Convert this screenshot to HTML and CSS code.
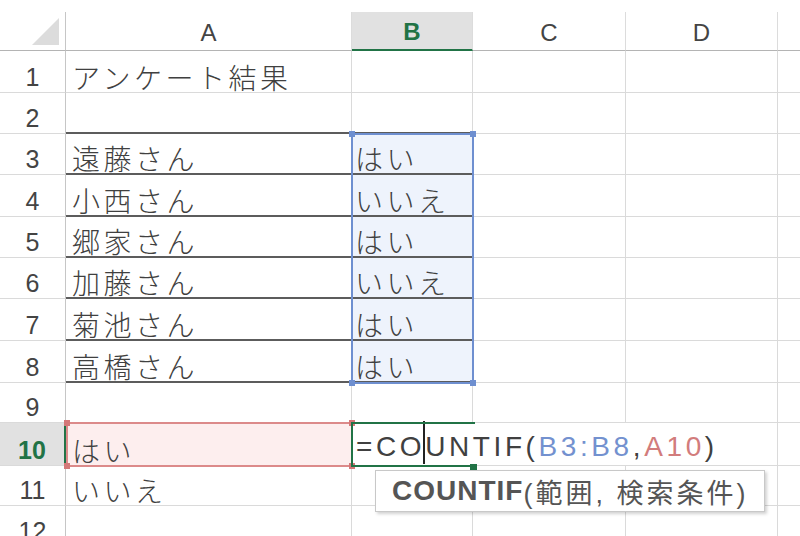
FILE: index.html
```html
<!DOCTYPE html>
<html lang="ja">
<head>
  <meta charset="UTF-8" />
  <title>COUNTIF</title>
  <link rel="stylesheet" href="styles.css">
</head>
<body>
  <div class="sheet">
    <div class="corner"><span class="tri"></span></div>
    <div class="col-head">A</div>
    <div class="col-head active">B</div>
    <div class="col-head">C</div>
    <div class="col-head">D</div>
    <div class="col-head"></div>

    <div class="row-head">1</div>
    <div class="cell">アンケート結果</div>
    <div class="cell b"></div><div class="cell"></div><div class="cell"></div><div class="cell"></div>

    <div class="row-head">2</div>
    <div class="cell tb"></div>
    <div class="cell b tb"></div><div class="cell"></div><div class="cell"></div><div class="cell"></div>

    <div class="row-head">3</div>
    <div class="cell tb">遠藤さん</div>
    <div class="cell b tb sel">はい</div><div class="cell"></div><div class="cell"></div><div class="cell"></div>

    <div class="row-head">4</div>
    <div class="cell tb">小西さん</div>
    <div class="cell b tb sel">いいえ</div><div class="cell"></div><div class="cell"></div><div class="cell"></div>

    <div class="row-head">5</div>
    <div class="cell tb">郷家さん</div>
    <div class="cell b tb sel">はい</div><div class="cell"></div><div class="cell"></div><div class="cell"></div>

    <div class="row-head">6</div>
    <div class="cell tb">加藤さん</div>
    <div class="cell b tb sel">いいえ</div><div class="cell"></div><div class="cell"></div><div class="cell"></div>

    <div class="row-head">7</div>
    <div class="cell tb">菊池さん</div>
    <div class="cell b tb sel">はい</div><div class="cell"></div><div class="cell"></div><div class="cell"></div>

    <div class="row-head">8</div>
    <div class="cell tb">高橋さん</div>
    <div class="cell b tb sel">はい</div><div class="cell"></div><div class="cell"></div><div class="cell"></div>

    <div class="row-head">9</div>
    <div class="cell"></div>
    <div class="cell b"></div><div class="cell"></div><div class="cell"></div><div class="cell"></div>

    <div class="row-head active">10</div>
    <div class="cell hit">はい</div>
    <div class="cell formula"><span class="fx">=CO<span class="caret"></span>UNTIF(<span class="ref-b">B3:B8</span>,<span class="ref-a">A10</span>)</span></div>
    <div class="cell"></div>

    <div class="row-head">11</div>
    <div class="cell">いいえ</div>
    <div class="cell b"></div><div class="cell"></div><div class="cell"></div><div class="cell"></div>

    <div class="row-head">12</div>
    <div class="cell"></div>
    <div class="cell b"></div><div class="cell"></div><div class="cell"></div><div class="cell"></div>

    <!-- selections drawn over the grid -->
    <div class="range range-blue">
      <i class="h tl"></i><i class="h tr"></i><i class="h bl"></i><i class="h br"></i>
    </div>
    <div class="range range-red">
      <i class="h tl"></i><i class="h tr"></i><i class="h bl"></i><i class="h br"></i>
    </div>
    <div class="range active-cell"><i class="fill"></i></div>

    <div class="tip"><b>COUNTIF</b><span class="args">(範囲, 検索条件)</span></div>
  </div>
</body>
</html>
```

FILE: styles.css
```css
body {
  margin: 0;
  padding: 0;
  background: #fff;
  overflow: hidden;
}

.sheet {
  position: relative;
  display: grid;
  grid-template-columns: 66px 286px 121px 153px 152px 40px;
  grid-template-rows: 39px 42px 41px 41px 42px 41px 41px 42px 42px 40px 43px 40px 41px;
  padding-top: 12px;
  width: 800px;
  overflow: hidden;
  font-family: "Liberation Sans", "Noto Sans CJK JP", sans-serif;
  color: #444;
}

.sheet > div {
  box-sizing: border-box;
}

.corner {
  display: flex;
  justify-content: flex-end;
  align-items: flex-end;
  padding: 0 6px 5px 0;
  border-right: 1px solid #c6c6c6;
  border-bottom: 1px solid #b4b4b4;
}

.tri {
  width: 27px;
  height: 27px;
  background: #dcdcdc;
  clip-path: polygon(100% 0, 100% 100%, 0 100%);
}

.col-head {
  display: flex;
  justify-content: center;
  align-items: center;
  padding-top: 3px;
  font-size: 24px;
  color: #444;
  border-right: 1px solid #dcdcdc;
  border-bottom: 1px solid #b4b4b4;
}

.col-head.active {
  background: #e1e1e1;
  color: #217346;
  font-weight: bold;
  border-bottom: 2px solid #217346;
}

.row-head {
  display: flex;
  justify-content: center;
  align-items: flex-end;
  padding-bottom: 2px;
  font-size: 25px;
  line-height: 1;
  color: #444;
  border-right: 1px solid #c6c6c6;
  border-bottom: 1px solid #dadada;
}

.row-head.active {
  background: #e1e1e1;
  color: #217346;
  font-weight: bold;
  border-right: 2px solid #217346;
}

.cell {
  display: flex;
  align-items: flex-end;
  padding: 0 0 1px 6px;
  font-family: "Noto Sans CJK JP", sans-serif;
  font-weight: 300;
  font-size: 28px;
  line-height: 1;
  letter-spacing: 3.5px;
  color: #404040;
  white-space: nowrap;
  border-right: 1px solid #dadada;
  border-bottom: 1px solid #dadada;
}

.cell.b {
  padding-left: 3px;
}

.cell.tb {
  border-bottom: 2px solid #5c5c5c;
}

.cell.sel {
  background: #eef3fc;
}

.cell.hit {
  background: #fdeeee;
}

.formula {
  grid-column: span 3;
  padding: 0 0 4px 4px;
  font-family: "Liberation Sans", sans-serif;
  font-weight: normal;
  font-size: 28px;
  letter-spacing: 3.6px;
  color: #404040;
}

.fx {
  position: relative;
}

.caret {
  display: inline-block;
  position: relative;
  width: 0;
  height: 0;
}

.caret::after {
  content: "";
  position: absolute;
  left: -2px;
  bottom: -8px;
  height: 43px;
  border-left: 2px solid #222;
}

.ref-b {
  color: #7391cf;
}

.ref-a {
  color: #d27c7c;
}

.range {
  position: absolute;
  pointer-events: none;
  box-sizing: border-box;
}

.range-blue {
  grid-column: 3 / 4;
  grid-row: 4 / 10;
  top: -1px;
  bottom: -1px;
  left: -1px;
  right: -1px;
  border: 2px solid #6e8fd0;
}

.range-red {
  grid-column: 2 / 3;
  grid-row: 11 / 12;
  top: -1px;
  bottom: -1px;
  left: 0;
  right: -1px;
  border: 2px solid #dc8a8a;
}

.h {
  position: absolute;
  width: 6px;
  height: 6px;
  background: #6e8fd0;
}

.range-red .h {
  background: #d47878;
}

.h.tl { top: -4px; left: -4px; }
.h.tr { top: -4px; right: -4px; }
.h.bl { bottom: -4px; left: -4px; }
.h.br { bottom: -4px; right: -4px; }

.active-cell {
  grid-column: 3 / 4;
  grid-row: 11 / 12;
  top: -1px;
  bottom: -1px;
  left: -1px;
  right: -2px;
  border: 2px solid #217346;
  border-right: none;
}

.fill {
  position: absolute;
  right: -2px;
  bottom: -5px;
  width: 7px;
  height: 6px;
  background: #217346;
}

.tip {
  position: absolute;
  grid-column: 3;
  grid-row: 12;
  left: 23px;
  top: 4px;
  width: 390px;
  height: 42px;
  display: flex;
  align-items: center;
  padding-left: 16px;
  background: #fff;
  border: 1px solid #c8c8c8;
  box-shadow: 2px 2px 3px rgba(0, 0, 0, 0.18);
  font-size: 27px;
  color: #555;
  white-space: nowrap;
}

.tip b {
  font-size: 28px;
  letter-spacing: 1px;
}

.tip .args {
  letter-spacing: 3px;
}
```
